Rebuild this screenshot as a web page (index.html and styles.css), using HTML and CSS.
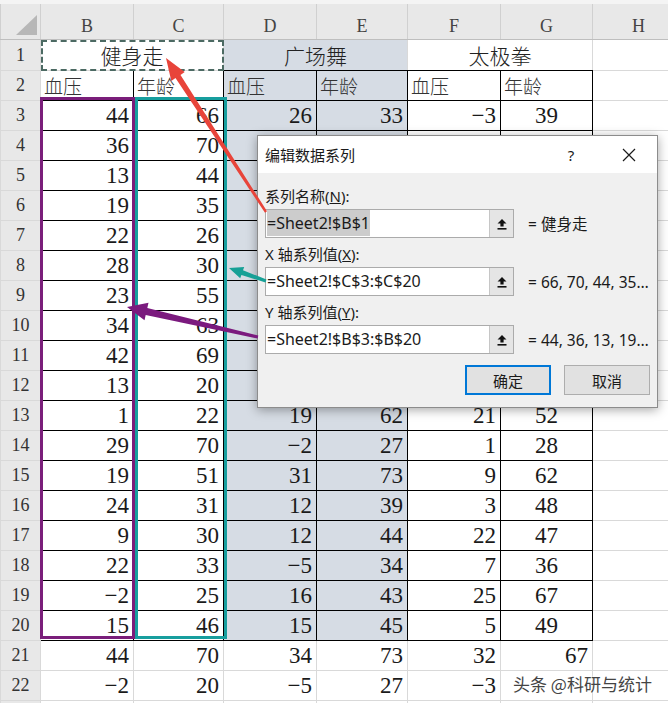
FILE: index.html
```html
<!DOCTYPE html>
<html>
<head>
    <meta charset="UTF-8">
    <title>编辑数据系列</title>
    <link rel="stylesheet" href="styles.css">
</head>
<body>

    <div class="sheet">
        <div class="sheet-top"></div>
        <table class="grid">
            <colgroup>
                <col class="c-head"><col class="c-b"><col class="c-c"><col class="c-d"><col class="c-e"><col class="c-f"><col class="c-g"><col class="c-h">
            </colgroup>
            <tbody id="rows">
                <tr class="col-heads">
                    <th class="corner"><svg width="40" height="35" viewBox="0 0 40 35"><path d="M15 31 L36 31 L36 11 Z" fill="#b7b7b7"/></svg></th>
                    <th>B</th><th>C</th><th>D</th><th>E</th><th>F</th><th>G</th><th>H</th>
                </tr>
                <tr>
                    <th class="row-head">1</th>
                    <td colspan="2" class="title marquee">健身走</td>
                    <td colspan="2" class="title shade blk-b">广场舞</td>
                    <td colspan="2" class="title blk-b">太极拳</td>
                    <td></td>
                </tr>
                <tr>
                    <th class="row-head">2</th>
                    <td class="lbl blk">血压</td><td class="lbl blk">年龄</td>
                    <td class="lbl blk shade">血压</td><td class="lbl blk shade">年龄</td>
                    <td class="lbl blk">血压</td><td class="lbl blk">年龄</td>
                    <td></td>
                </tr>
            </tbody>
        </table>

        <div class="range range-b"></div>
        <div class="range range-c"></div>

        <div class="dialog">
            <div class="dialog-head">
                <span class="dialog-title">编辑数据系列</span>
                <span class="dialog-help">?</span>
                <span class="dialog-close"><svg width="14" height="14" viewBox="0 0 14 14"><path d="M1 1 L13 13 M13 1 L1 13" stroke="#1a1a1a" stroke-width="1.2" fill="none"/></svg></span>
            </div>
            <div class="dialog-body">
                <div class="field-label">系列名称(<u>N</u>):</div>
                <div class="field-row">
                    <div class="ref-box">
                        <span class="ref-text"><span class="sel">=Sheet2!$B$1</span></span>
                        <span class="ref-btn"><svg width="12" height="12" viewBox="0 0 12 12"><path d="M6 1 L10.5 5.5 H7.6 V8.5 H4.4 V5.5 H1.5 Z" fill="#111"/><rect x="1.5" y="10" width="9" height="1.6" fill="#111"/></svg></span>
                    </div>
                    <span class="ref-value">= 健身走</span>
                </div>
                <div class="field-label">X 轴系列值(<u>X</u>):</div>
                <div class="field-row">
                    <div class="ref-box">
                        <span class="ref-text">=Sheet2!$C$3:$C$20</span>
                        <span class="ref-btn"><svg width="12" height="12" viewBox="0 0 12 12"><path d="M6 1 L10.5 5.5 H7.6 V8.5 H4.4 V5.5 H1.5 Z" fill="#111"/><rect x="1.5" y="10" width="9" height="1.6" fill="#111"/></svg></span>
                    </div>
                    <span class="ref-value">= 66, 70, 44, 35…</span>
                </div>
                <div class="field-label">Y 轴系列值(<u>Y</u>):</div>
                <div class="field-row">
                    <div class="ref-box">
                        <span class="ref-text">=Sheet2!$B$3:$B$20</span>
                        <span class="ref-btn"><svg width="12" height="12" viewBox="0 0 12 12"><path d="M6 1 L10.5 5.5 H7.6 V8.5 H4.4 V5.5 H1.5 Z" fill="#111"/><rect x="1.5" y="10" width="9" height="1.6" fill="#111"/></svg></span>
                    </div>
                    <span class="ref-value">= 44, 36, 13, 19…</span>
                </div>
                <div class="dialog-buttons">
                    <button class="btn btn-ok">确定</button>
                    <button class="btn">取消</button>
                </div>
            </div>
        </div>

        <svg class="arrows" width="668" height="703" viewBox="0 0 668 703">
            <polygon fill="#e8443a" points="166,58 184.7,72.1 180.5,74.9 267,211.3 265,212.7 175.5,78.1 171.3,80.9"/>
            <polygon fill="#17a096" points="229,268 244.2,266.9 243,270.2 266.5,279.6 265.5,282.4 241.4,275 240.2,278.3"/>
            <polygon fill="#7b1a7e" points="127,307 148.5,302.7 147.3,308.1 258.3,335.5 257.7,338.5 145.7,314.9 144.5,320.3"/>
        </svg>

        <div class="watermark">头条 @科研与统计</div>
    </div>

    <script>
        var rows = document.querySelector("#rows");

        // row number, then B..G (cells under the dialog left empty)
        var data = [
            [3, 44, 66, 26, 33, -3, 39],
            [4, 36, 70, "", "", "", ""],
            [5, 13, 44, "", "", "", ""],
            [6, 19, 35, "", "", "", ""],
            [7, 22, 26, "", "", "", ""],
            [8, 28, 30, "", "", "", ""],
            [9, 23, 55, "", "", "", ""],
            [10, 34, 63, "", "", "", ""],
            [11, 42, 69, "", "", "", ""],
            [12, 13, 20, "", "", "", ""],
            [13, 1, 22, 19, 62, 21, 52],
            [14, 29, 70, -2, 27, 1, 28],
            [15, 19, 51, 31, 73, 9, 62],
            [16, 24, 31, 12, 39, 3, 48],
            [17, 9, 30, 12, 44, 22, 47],
            [18, 22, 33, -5, 34, 7, 36],
            [19, -2, 25, 16, 43, 25, 67],
            [20, 15, 46, 15, 45, 5, 49]
        ];
        var tail = [
            [21, 44, 70, 34, 73, 32, 67],
            [22, -2, 20, -5, 27, -3, ""],
            [23, "", "", "", "", "", ""]
        ];

        function fmt(v){
            return String(v).replace("-", "\u2212");
        }

        var html = "";

        for (var i = 0; i < data.length; i++){
            html += "<tr><th class='row-head'>" + data[i][0] + "</th>";
            for (var k = 1; k <= 6; k++){
                var cls = "num blk";
                if ( k == 3 || k == 4 ) cls += " shade";
                if ( k == 6 ) cls += " center";
                html += "<td class='" + cls + "'>" + fmt(data[i][k]) + "</td>";
            }
            html += "<td></td></tr>";
        }

        for (var i = 0; i < tail.length; i++){
            html += "<tr><th class='row-head'>" + tail[i][0] + "</th>";
            for (var k = 1; k <= 6; k++){
                html += "<td class='num'>" + fmt(tail[i][k]) + "</td>";
            }
            html += "<td></td></tr>";
        }

        rows.insertAdjacentHTML("beforeend", html);
    </script>
</body>
</html>
```

FILE: styles.css
```css
BODY {
    margin: 0;
    background: #FFF;
    overflow: hidden;
    }
.sheet {
    position: relative;
    width: 668px;
    height: 703px;
    overflow: hidden;
    }
.sheet-top {
    height: 4px;
    background: #F4F4F4;
    }

/* grid */
.grid {
    width: 684px;
    border-collapse: collapse;
    table-layout: fixed;
    font-family: "Liberation Serif", "Noto Sans CJK SC", serif;
    font-size: 23px;
    color: #1A1A1A;
    }
.c-head { width: 40px; }
.c-b { width: 93px; }
.c-c { width: 90px; }
.c-d { width: 93px; }
.c-e { width: 91px; }
.c-f { width: 93px; }
.c-g { width: 92px; }
.c-h { width: 92px; }
.grid TR {
    height: 30px;
    }
.grid TD, .grid TH {
    padding: 0 4px;
    border: 1px solid #D9D9D9;
    white-space: nowrap;
    overflow: hidden;
    font-weight: normal;
    }
.col-heads {
    height: 35px;
    }
    .col-heads TH {
        padding: 0 0 2px;
        vertical-align: bottom;
        background: #E8E8E8;
        border-color: #D0D0D0;
        border-top: 0;
        border-bottom-color: #BEBEBE;
        font-size: 18px;
        color: #444;
        }
    .col-heads .corner {
        padding: 0;
        vertical-align: top;
        line-height: 0;
        }
.row-head {
    padding: 0;
    background: #E8E8E8;
    border-color: #D0D0D0 #C4C4C4;
    text-align: center;
    font-size: 18px;
    color: #333;
    }
.grid .title {
    text-align: center;
    font-size: 21px;
    font-weight: 300;
    color: #222;
    }
.marquee {
    outline: 2px dashed #4C6A63;
    outline-offset: -2px;
    }
.grid .lbl {
    padding-left: 3px;
    text-align: left;
    font-size: 19px;
    font-weight: 300;
    color: #333;
    }
.num {
    text-align: right;
    }
.center {
    text-align: center;
    }
.shade {
    background: #D6DCE4;
    }
.grid .blk {
    border-color: #000;
    }
.grid .blk-b {
    border-bottom-color: #000;
    }

/* range highlights */
.range {
    position: absolute;
    top: 97px;
    height: 542px;
    box-sizing: border-box;
    border: 3px solid;
    }
.range-b {
    left: 40px;
    width: 95px;
    border-color: #7A1E7A;
    }
.range-c {
    left: 135px;
    width: 92px;
    border-color: #179E9E;
    }

/* dialog */
.dialog {
    position: absolute;
    left: 257px;
    top: 135px;
    width: 401px;
    height: 273px;
    box-sizing: border-box;
    background: #F0F0F0;
    border: 1px solid #8C8C8C;
    box-shadow: 0 2px 10px rgba(0, 0, 0, .35);
    font-family: "Noto Sans", "Noto Sans CJK SC", sans-serif;
    font-size: 15px;
    color: #1A1A1A;
    }
.dialog-head {
    display: flex;
    align-items: center;
    height: 37px;
    padding-left: 7px;
    background: #FFF;
    }
.dialog-title {
    flex: 1;
    }
.dialog-help {
    width: 30px;
    margin-right: 20px;
    text-align: center;
    }
.dialog-close {
    display: flex;
    justify-content: center;
    width: 46px;
    margin-right: 5px;
    }
.dialog-body {
    padding: 11px 7px 0;
    }
.field-label {
    height: 24px;
    margin-bottom: 1px;
    line-height: 24px;
    }
.field-row {
    display: flex;
    align-items: center;
    gap: 14px;
    margin-bottom: 4px;
    }
.ref-box {
    display: flex;
    flex: none;
    width: 249px;
    height: 29px;
    box-sizing: border-box;
    background: #FFF;
    border: 1px solid #ABABAB;
    }
.ref-text {
    flex: 1;
    padding-left: 1px;
    line-height: 27px;
    font-size: 16px;
    white-space: nowrap;
    overflow: hidden;
    }
.sel {
    padding: 2px 0;
    background: #CCC;
    }
.ref-btn {
    display: flex;
    align-items: center;
    justify-content: center;
    width: 23px;
    background: #E5E5E5;
    border-left: 1px solid #C6C6C6;
    }
.ref-value {
    white-space: nowrap;
    font-size: 15.5px;
    }
.dialog-buttons {
    display: flex;
    justify-content: flex-end;
    gap: 13px;
    margin-top: 11px;
    }
.btn {
    width: 86px;
    height: 30px;
    padding: 0;
    background: #E1E1E1;
    border: 1px solid #ADADAD;
    font: inherit;
    color: #1A1A1A;
    }
.btn-ok {
    border-color: #0078D7;
    box-shadow: inset 0 0 0 1px #0078D7;
    }

/* overlays */
.arrows {
    position: absolute;
    left: 0;
    top: 0;
    pointer-events: none;
    }
.watermark {
    position: absolute;
    left: 513px;
    top: 673px;
    font-family: "Noto Sans CJK SC", sans-serif;
    font-size: 17px;
    line-height: 22px;
    color: #444;
    text-shadow: 0 0 2px #FFF, 0 0 2px #FFF;
    }
```
